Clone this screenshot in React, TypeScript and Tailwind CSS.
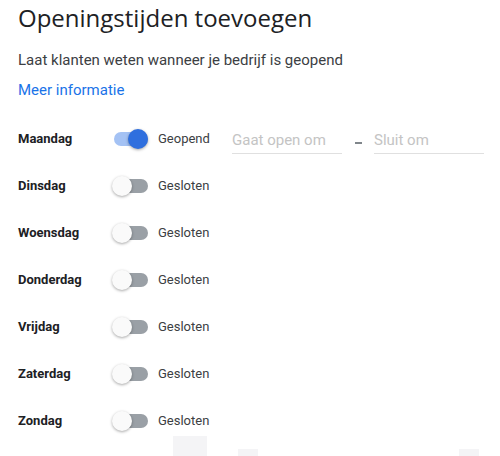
import React from "react";

const days = [
  { name: "Maandag", open: true },
  { name: "Dinsdag", open: false },
  { name: "Woensdag", open: false },
  { name: "Donderdag", open: false },
  { name: "Vrijdag", open: false },
  { name: "Zaterdag", open: false },
  { name: "Zondag", open: false },
];

function Toggle({ on }: { on: boolean }) {
  return (
    <div className="relative w-[34px] h-[14px] shrink-0">
      <div
        className={
          on
            ? "absolute inset-0 rounded-full bg-[#a4c2f4]"
            : "absolute inset-0 rounded-full bg-[#9aa0a6]"
        }
      />
      <div
        className={
          on
            ? "absolute top-[-3px] left-[14px] w-[20px] h-[20px] rounded-full bg-[#2f6fde] shadow-[0_1px_3px_rgba(0,0,0,0.35)]"
            : "absolute top-[-3px] left-[-2px] w-[20px] h-[20px] rounded-full bg-[#fafafa] shadow-[0_1px_3px_rgba(0,0,0,0.35)]"
        }
      />
    </div>
  );
}

export default function App() {
  return (
    <div
      className="w-[500px] h-[456px] bg-white overflow-hidden text-[#202124]"
      style={{ fontFamily: "Roboto, 'Liberation Sans', sans-serif" }}
    >
      <div className="pl-[18px] pr-[14px]">
        <div
          className="h-[36px] flex items-center text-[24px] text-[#202124]"
          style={{ fontFamily: "'Open Sans', Roboto, sans-serif" }}
        >
          Openingstijden toevoegen
        </div>
        <div className="mt-[12px] h-[24px] flex items-center text-[15px] text-[#3c4043]">
          Laat klanten weten wanneer je bedrijf is geopend
        </div>
        <div className="mt-[6px] h-[24px] flex items-center text-[15px] text-[#1a73e8]">
          Meer informatie
        </div>
        <div className="mt-[13px] flex flex-col">
          {days.map((d) => (
            <div key={d.name} className="h-[47px] flex items-center">
              <div className="w-[96px] shrink-0 text-[13px] font-bold text-[#202124]">{d.name}</div>
              <Toggle on={d.open} />
              <div className="ml-[10px] w-[74px] shrink-0 text-[13px] text-[#3c4043]">
                {d.open ? "Geopend" : "Gesloten"}
              </div>
              {d.open && (
                <div className="flex items-center shrink-0">
                  <input
                    readOnly
                    placeholder="Gaat open om"
                    className="w-[110px] shrink-0 h-[30px] pt-[3px] border-b border-[#e0e0e0] text-[15px] outline-none placeholder:text-[#c4c4c4] bg-transparent"
                  />
                  <div className="w-[32px] shrink-0 flex justify-center pt-[9px]">
                    <div className="w-[7px] h-[1.5px] bg-[#80868b]" />
                  </div>
                  <input
                    readOnly
                    placeholder="Sluit om"
                    className="w-[110px] shrink-0 h-[30px] pt-[3px] border-b border-[#e0e0e0] text-[15px] outline-none placeholder:text-[#c4c4c4] bg-transparent"
                  />
                </div>
              )}
            </div>
          ))}
        </div>
      </div>
      <div className="mt-[-8px] h-[20px] flex items-start">
        <div className="ml-[173px] w-[34px] h-[20px] bg-[#f4f4f6]" />
        <div className="ml-[31px] mt-[13px] w-[20px] h-[7px] bg-[#f4f4f6]" />
        <div className="ml-[201px] mt-[13px] w-[20px] h-[7px] bg-[#f4f4f6]" />
      </div>
    </div>
  );
}
